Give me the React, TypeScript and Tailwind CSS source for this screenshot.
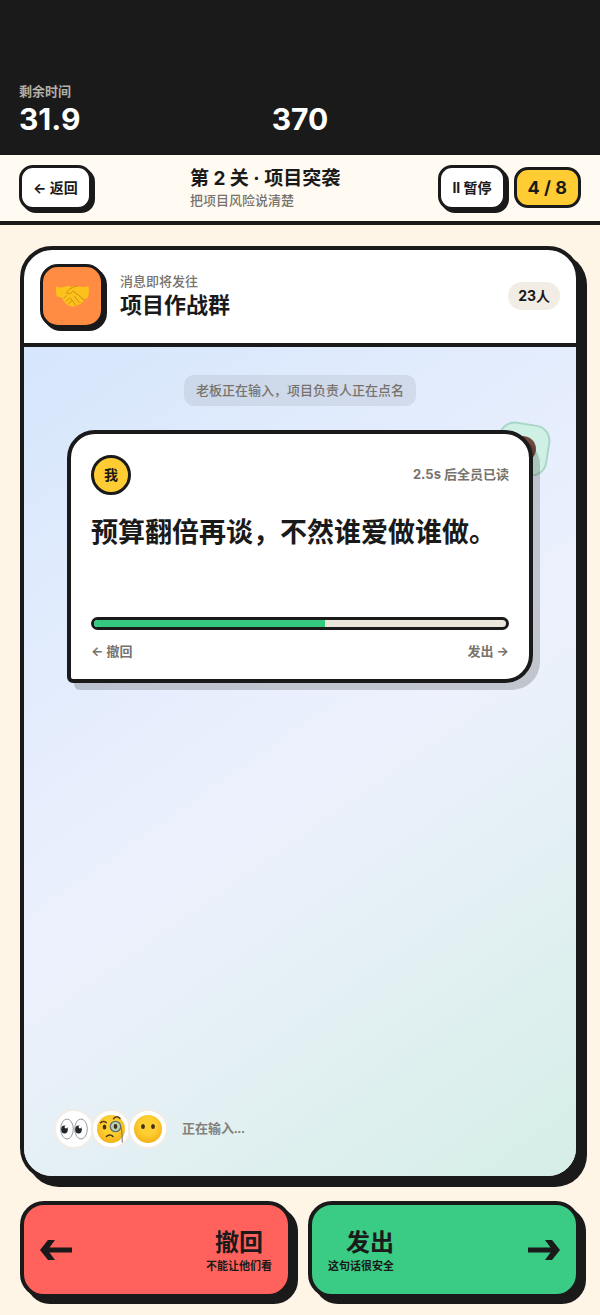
import type { ReactNode } from "react";

function BigArrow({ direction }: { direction: "left" | "right" }) {
  return (
    <svg
      viewBox="0 0 32 20"
      aria-hidden="true"
      className={direction === "left" ? "h-5 w-8 shrink-0" : "h-5 w-8 shrink-0 rotate-180"}
    >
      <path d="M0 10 8 0h7L9.5 7.5H32v5H9.5L15 20H8z" fill="#1a1a1a" />
    </svg>
  );
}

function Handshake() {
  return (
    <svg viewBox="0 0 36 26" aria-hidden="true" className="h-[25px] w-[35px]">
      <path
        d="M1 2.500c3 1.300 6 1.500 9 .3 2.500-1 4.500-.8 7 .2 2-1.200 4.500-1.700 7-.6 3.500 1.300 6.500 1 10.500-.4 1 4.500.8 8.500-.8 12.500-1.700.2-3 .8-4.200 1.900.3 1.800-.8 2.900-2.500 2.700-.2 1.900-1.500 2.800-3.300 2.300-.6 1.700-2.200 2.200-3.700 1.200-1.400 1.700-3.300 1.400-4.400-.2-1.800.6-3-.2-3.200-1.800-1.900 0-2.800-1-2.600-2.700-1.800-.2-2.500-1.500-2-3.200C5 13.500 3.500 13 2 13.200.6 9.500.4 6 1 2.500z"
        fill="#fcc21b"
      />
      <path
        d="M23 2.500c-4.500-.6-8.900 3-11.400 6.700 2.400 1.500 5.200.5 7.100-1.800 3.700 2.800 7.500 5.700 11 9M16 15l5.500 7M20 13l5 6M9.500 14.500l2-2.300M11.800 17.700l2.900-3.200M14.500 20.200l2.400-2.700"
        fill="none"
        stroke="#c98a12"
        strokeWidth="1"
        strokeLinecap="round"
        strokeLinejoin="round"
      />
    </svg>
  );
}

function Eyes() {
  return (
    <svg viewBox="0 0 30 30" aria-hidden="true" className="size-[30px]">
      <g fill="#fdfdfd" stroke="#7d8388" strokeWidth="0.8">
        <ellipse cx="8" cy="15" rx="6.300" ry="10" />
        <ellipse cx="22" cy="15" rx="6.300" ry="10" />
      </g>
      <g fill="#212529">
        <ellipse cx="5.500" cy="15.500" rx="3.300" ry="4" />
        <ellipse cx="19.500" cy="15.500" rx="3.300" ry="4" />
      </g>
      <circle cx="7" cy="13" r="1.400" fill="#fff" />
      <circle cx="21" cy="13" r="1.400" fill="#fff" />
    </svg>
  );
}

function FaceFill({ id }: { id: string }) {
  return (
    <>
      <defs>
        <radialGradient id={id} cx="0.5" cy="0.4" r="0.6">
          <stop offset="0.5" stopColor="#fdcf32" />
          <stop offset="1" stopColor="#f5b016" />
        </radialGradient>
      </defs>
      <circle cx="15" cy="15" r="14" fill={`url(#${id})`} />
    </>
  );
}

function MonocleFace() {
  return (
    <svg viewBox="0 0 30 30" aria-hidden="true" className="size-[30px]">
      <FaceFill id="monocle-face" />
      <ellipse cx="8.500" cy="13" rx="1.800" ry="2.500" fill="#3f3020" />
      <path d="M4.500 8.800c2-1.600 4-1.500 5.800-.2M17.500 4.800c1.600-2.600 4.600-2.800 6.500-.3" fill="none" stroke="#5a3c16" strokeWidth="1.500" strokeLinecap="round" />
      <circle cx="19.500" cy="12.500" r="5.200" fill="#b9cfae" stroke="#5f6f70" strokeWidth="1.300" />
      <ellipse cx="19.500" cy="12.500" rx="1.800" ry="2.400" fill="#3f3020" />
      <path d="M24.800 12.500c1.300 5 1.400 10 1.400 16" fill="none" stroke="#66706c" strokeWidth="1" />
      <path d="M10.500 22.500c1.800-2 4.700-2 6.500 0" fill="none" stroke="#4a3314" strokeWidth="1.600" strokeLinecap="round" />
    </svg>
  );
}

function SilentFace() {
  return (
    <svg viewBox="0 0 30 30" aria-hidden="true" className="size-[30px]">
      <FaceFill id="silent-face" />
      <ellipse cx="10" cy="12.500" rx="1.900" ry="2.600" fill="#3f3020" />
      <ellipse cx="20" cy="12.500" rx="1.900" ry="2.600" fill="#3f3020" />
    </svg>
  );
}

function Watcher({ children }: { children: ReactNode }) {
  return (
    <span className="-ml-[3px] flex size-10 items-center justify-center rounded-full border-2 border-[#f1ece6] bg-white">
      {children}
    </span>
  );
}

function StatusHeader() {
  return (
    <header className="grid grid-cols-3 bg-[#1a1a1a] px-[19px] pt-[83px] pb-[18px] text-white">
      <div>
        <p className="text-[13px] leading-[18px] font-bold text-[#b5afa6]">剩余时间</p>
        <p className="font-['Inter',sans-serif] text-[30px] leading-9 font-bold">31.9</p>
      </div>
      <p className="self-end text-center font-['Inter',sans-serif] text-[30px] leading-9 font-bold">370</p>
    </header>
  );
}

function LevelBar() {
  const button =
    "h-[45px] rounded-[14px] border-[3px] border-[#1a1a1a] bg-white px-[11px] font-['Inter','Noto_Sans_CJK_SC',sans-serif] text-sm font-bold whitespace-nowrap shadow-[3px_3px_0_#1a1a1a]";
  return (
    <nav className="flex items-center justify-between border-b-4 border-[#1a1a1a] bg-[#fffbf3] px-[19px] pt-2.5 pb-[11px]">
      <button type="button" className={button}>
        ← 返回
      </button>
      <div>
        <h1 className="font-['Inter','Noto_Sans_CJK_SC',sans-serif] text-[19px] leading-[26px] font-bold">第 2 关 · 项目突袭</h1>
        <p className="text-[13px] leading-[18px] font-medium text-[#77736c]">把项目风险说清楚</p>
      </div>
      <div className="flex items-center gap-2">
        <button type="button" className={button}>
          II 暂停
        </button>
        <span className="flex h-[41px] items-center rounded-[14px] border-[3px] border-[#1a1a1a] bg-[#ffcc33] px-[11px] font-['Inter',sans-serif] text-lg font-bold">
          4 / 8
        </span>
      </div>
    </nav>
  );
}

function DraftBubble() {
  return (
    <article className="relative mx-[43px] mt-6 rounded-[28px] rounded-bl-md border-4 border-[#1a1a1a] bg-white px-5 pt-[21px] pb-[18px] shadow-[7px_7px_0_rgba(26,26,26,0.2)]">
      <div className="flex items-center justify-between">
        <span className="flex size-10 items-center justify-center rounded-full border-[3px] border-[#1a1a1a] bg-[#ffcc33] text-sm font-bold">
          我
        </span>
        <span className="font-['Inter','Noto_Sans_CJK_SC',sans-serif] text-[13px] font-bold text-[#77736c]">2.5s 后全员已读</span>
      </div>
      <p className="mt-5 min-h-[78px] text-[27px] leading-9 font-bold">预算翻倍再谈，不然谁爱做谁做。</p>
      <div
        role="progressbar"
        aria-label="发送倒计时"
        aria-valuenow={56}
        aria-valuemin={0}
        aria-valuemax={100}
        className="mt-6 h-[13px] overflow-hidden rounded-full border-[3px] border-[#1a1a1a] bg-[#ebe6dc]"
      >
        <div className="h-full w-[56%] bg-[#35c97f]" />
      </div>
      <div className="mt-[11px] flex justify-between font-['Inter','Noto_Sans_CJK_SC',sans-serif] text-[13px] leading-5 font-bold text-[#77736c]">
        <span>← 撤回</span>
        <span>发出 →</span>
      </div>
    </article>
  );
}

function ChatCard() {
  return (
    <section className="flex flex-1 flex-col overflow-hidden rounded-[32px] border-4 border-[#1a1a1a] bg-white shadow-[7px_7px_0_#1a1a1a]">
      <header className="flex items-center gap-4 border-b-4 border-[#1a1a1a] px-4 pt-3.5 pb-[15px]">
        <span className="flex size-16 shrink-0 items-center justify-center rounded-[18px] border-[3px] border-[#1a1a1a] bg-[#ff8c42] shadow-[3px_3px_0_#1a1a1a]">
          <Handshake />
        </span>
        <div className="flex-1 pt-0.5">
          <p className="text-[13px] leading-[18px] font-medium text-[#77736c]">消息即将发往</p>
          <h2 className="text-[22px] leading-[30px] font-bold">项目作战群</h2>
        </div>
        <span className="rounded-full bg-[#f1ede4] px-2.5 font-['Inter','Noto_Sans_CJK_SC',sans-serif] text-sm leading-7 font-bold">23人</span>
      </header>
      <div className="flex flex-1 flex-col bg-[linear-gradient(145deg,#d6e6fc_0%,#edf1fd_52%,#d5eee6_100%)]">
        <p className="mt-7 self-center rounded-[10px] bg-[#1a1a1a]/8 px-3 text-[13px] leading-[31px] font-medium text-[#77736c]">
          老板正在输入，项目负责人正在点名
        </p>
        <div className="relative">
          <span className="absolute top-[17px] right-[27px] flex size-[52px] rotate-[9deg] items-center justify-center rounded-[16px] border-2 border-[#a9d6c9] bg-[#cff0e5]">
            <svg viewBox="0 0 28 28" aria-hidden="true" className="size-7">
              <circle cx="14" cy="14" r="13" fill="#70483f" />
            </svg>
          </span>
          <DraftBubble />
        </div>
        <div className="mt-auto flex items-center pb-[27px] pl-[33px]">
          <Watcher>
            <Eyes />
          </Watcher>
          <Watcher>
            <MonocleFace />
          </Watcher>
          <Watcher>
            <SilentFace />
          </Watcher>
          <span className="ml-3.5 text-[13px] font-bold text-[#85817a]">正在输入...</span>
        </div>
      </div>
    </section>
  );
}

function Actions() {
  const button =
    "flex h-[97px] items-center justify-between rounded-[24px] border-4 border-[#1a1a1a] px-4 shadow-[6px_6px_0_#1a1a1a]";
  return (
    <div className="grid grid-cols-2 gap-4">
      <button type="button" className={`${button} bg-[#ff625d]`}>
        <BigArrow direction="left" />
        <span className="pt-1 text-center">
          <span className="block text-2xl leading-7 font-bold">撤回</span>
          <span className="block text-[11px] leading-[18px] font-bold">不能让他们看</span>
        </span>
      </button>
      <button type="button" className={`${button} bg-[#3acb84]`}>
        <span className="pt-1 text-right">
          <span className="block text-2xl leading-7 font-bold">发出</span>
          <span className="block text-[11px] leading-[18px] font-bold">这句话很安全</span>
        </span>
        <BigArrow direction="right" />
      </button>
    </div>
  );
}

export default function App() {
  return (
    <div className="flex min-h-screen flex-col bg-[#fff5e6] font-['Liberation_Sans','Noto_Sans_CJK_SC',sans-serif] text-[#1a1a1a]">
      <StatusHeader />
      <LevelBar />
      <main className="flex flex-1 flex-col gap-[21px] px-5 pt-[21px] pb-[17px]">
        <ChatCard />
        <Actions />
      </main>
    </div>
  );
}
